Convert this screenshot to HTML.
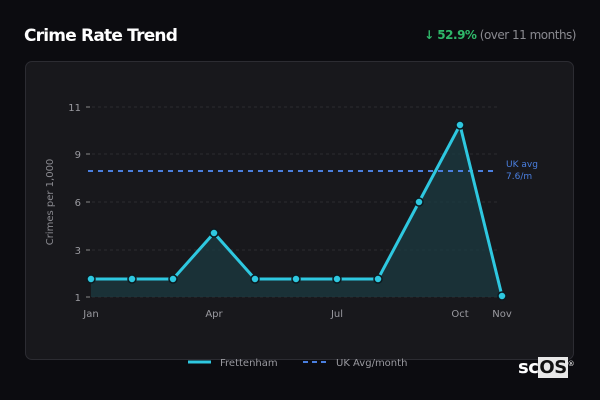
<!DOCTYPE html>
<html><head><meta charset="utf-8"><style>
html,body{margin:0;padding:0;background:#0c0c10;width:600px;height:400px;overflow:hidden;font-family:"DejaVu Sans","Liberation Sans",sans-serif;}
.title{position:absolute;left:24px;top:26px;color:#fff;font-weight:bold;font-size:17px;letter-spacing:-0.8px}
.chg{position:absolute;right:24px;top:28px;font-size:12px;color:#8a8a90;letter-spacing:-0.5px}
.chg b{color:#2fb86a}
.card{position:absolute;left:25px;top:61px;width:549px;height:299px;background:#18181c;border:1px solid #2c2c32;border-radius:7px;box-sizing:border-box}
svg{position:absolute;left:0;top:0}
.logo{position:absolute;left:518px;top:357px;font-size:18px;color:#fff;font-weight:bold;letter-spacing:-0.5px}
.logo span{background:#e8e8e8;color:#111;padding:0 1px}
</style></head><body>
<div class="title">Crime Rate Trend</div>
<div class="chg"><b>↓ 52.9%</b> (over 11 months)</div>
<div class="card"></div>
<svg width="600" height="400" font-family="DejaVu Sans, Liberation Sans, sans-serif">
<g stroke="#2c2c31" stroke-dasharray="3,3" stroke-width="1">
<line x1="92" y1="107" x2="500" y2="107"/><line x1="92" y1="154" x2="500" y2="154"/>
<line x1="92" y1="202" x2="500" y2="202"/><line x1="92" y1="250" x2="500" y2="250"/>
<line x1="92" y1="297" x2="500" y2="297"/></g>
<g stroke="#888" stroke-width="1"><line x1="86" y1="107" x2="90" y2="107"/><line x1="86" y1="154" x2="90" y2="154"/><line x1="86" y1="202" x2="90" y2="202"/><line x1="86" y1="250" x2="90" y2="250"/><line x1="86" y1="297" x2="90" y2="297"/></g>
<g fill="#9a9aa0" font-size="10" text-anchor="end"><text x="81" y="111">11</text><text x="81" y="158">9</text><text x="81" y="206">6</text><text x="81" y="254">3</text><text x="81" y="301">1</text></g>
<text transform="translate(53,202) rotate(-90)" fill="#8a8a90" font-size="10" text-anchor="middle">Crimes per 1,000</text>
<g fill="#9a9aa0" font-size="10" text-anchor="middle"><text x="91" y="317">Jan</text><text x="214" y="317">Apr</text><text x="337" y="317">Jul</text><text x="460" y="317">Oct</text><text x="502" y="317">Nov</text></g>
<path d="M91 279 L132 279 L173 279 L214 233 L255 279 L296 279 L337 279 L378 279 L419 202 L460 125 L502 296 L502 297 L91 297 Z" fill="#1b3a40" fill-opacity="0.75"/>
<line x1="88" y1="171" x2="498" y2="171" stroke="#4a7fe0" stroke-width="2" stroke-dasharray="5,5"/>
<text x="506" y="167" fill="#4a7fe0" font-size="9">UK avg</text><text x="506" y="179" fill="#4a7fe0" font-size="9">7.6/m</text>
<polyline points="91,279 132,279 173,279 214,233 255,279 296,279 337,279 378,279 419,202 460,125 502,296" fill="none" stroke="#2ec8e0" stroke-width="3" stroke-linejoin="round"/>
<g fill="#2ec8e0" stroke="#0c1a20" stroke-width="1.5">
<circle cx="91" cy="279" r="4"/><circle cx="132" cy="279" r="4"/><circle cx="173" cy="279" r="4"/><circle cx="214" cy="233" r="4"/><circle cx="255" cy="279" r="4"/><circle cx="296" cy="279" r="4"/><circle cx="337" cy="279" r="4"/><circle cx="378" cy="279" r="4"/><circle cx="419" cy="202" r="4"/><circle cx="460" cy="125" r="4"/><circle cx="502" cy="296" r="4"/></g>
<line x1="188" y1="362" x2="211" y2="362" stroke="#2ec8e0" stroke-width="3"/>
<text x="220" y="366" fill="#9a9aa0" font-size="10">Frettenham</text>
<line x1="303" y1="362" x2="328" y2="362" stroke="#4a7fe0" stroke-width="2" stroke-dasharray="5,4"/>
<text x="336" y="366" fill="#9a9aa0" font-size="10">UK Avg/month</text>
</svg>
<div class="logo">sc<span>OS</span><sup style="font-size:7px;font-weight:normal">®</sup></div>
</body></html>
